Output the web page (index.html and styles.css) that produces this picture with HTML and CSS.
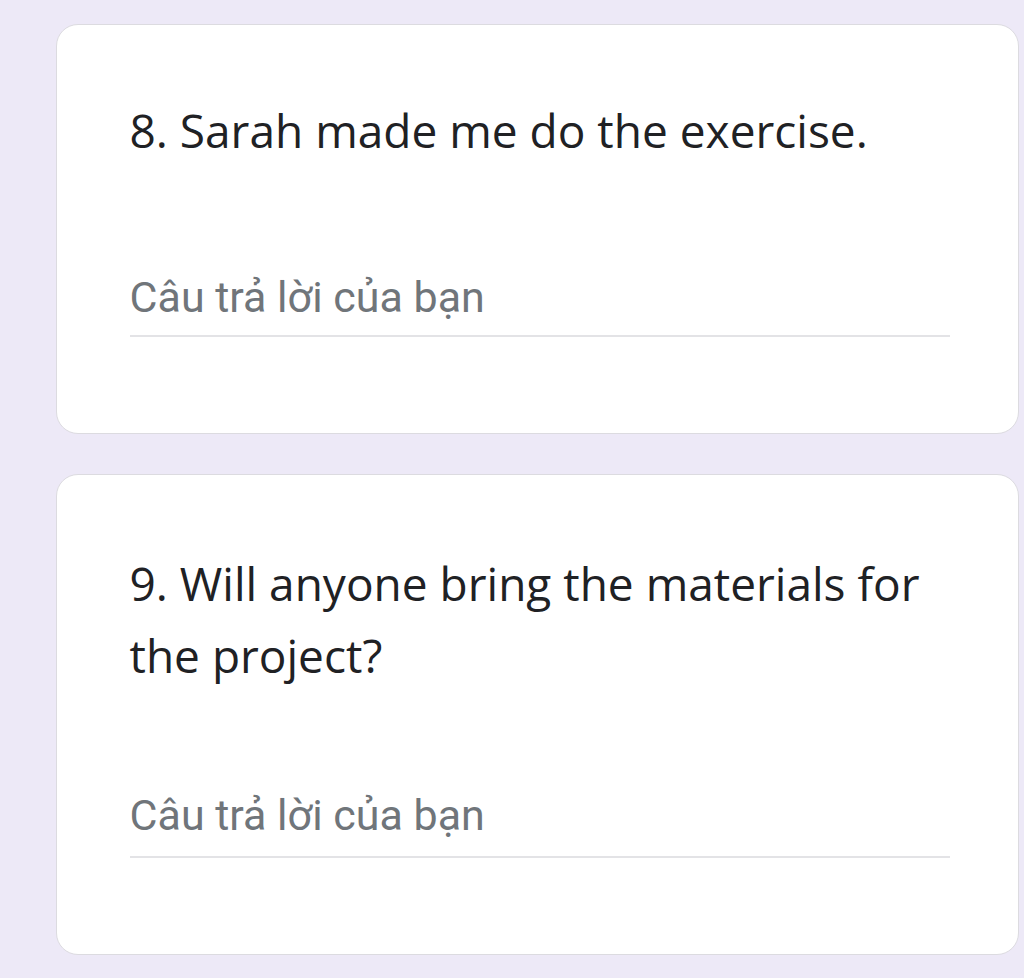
FILE: index.html
```html
<!DOCTYPE html>
<html lang="vi">
<head>
<meta charset="utf-8">
<link rel="stylesheet" href="styles.css">
</head>
<body>
<main class="form">
  <section class="card">
    <div class="question">8. Sarah made me do the exercise.</div>
    <div class="answer"><span class="placeholder">Câu trả lời của bạn</span></div>
  </section>
  <section class="card card-tall">
    <div class="question">9. Will anyone bring the materials for the project?</div>
    <div class="answer"><span class="placeholder">Câu trả lời của bạn</span></div>
  </section>
</main>
</body>
</html>
```

FILE: styles.css
```css
html, body {
  margin: 0;
  padding: 0;
  background: #ede9f7;
}
body {
  width: 1024px;
  height: 978px;
  overflow: hidden;
}
.form {
  display: flex;
  flex-direction: column;
  gap: 40px;
  padding: 24px 5px 0 56px;
}
.card {
  box-sizing: border-box;
  height: 410px;
  background: #ffffff;
  border: 1.5px solid #dcdbe0;
  border-radius: 22px;
  padding: 68.5px 68px 0 72.5px;
}
.card-tall {
  height: 481px;
  padding-top: 71.5px;
}
.question {
  font-family: "Open Sans", "Liberation Sans", sans-serif;
  font-size: 46px;
  line-height: 72px;
  color: #202124;
}
.answer {
  margin-top: 106.5px;
  border-bottom: 2px solid #e3e3e6;
  padding-bottom: 3px;
  line-height: 50px;
}
.card-tall .answer {
  margin-top: 99.5px;
  padding-bottom: 6px;
}
.placeholder {
  font-family: Roboto, "Liberation Sans", sans-serif;
  font-size: 43px;
  line-height: 50px;
  color: #70757a;
}
```
